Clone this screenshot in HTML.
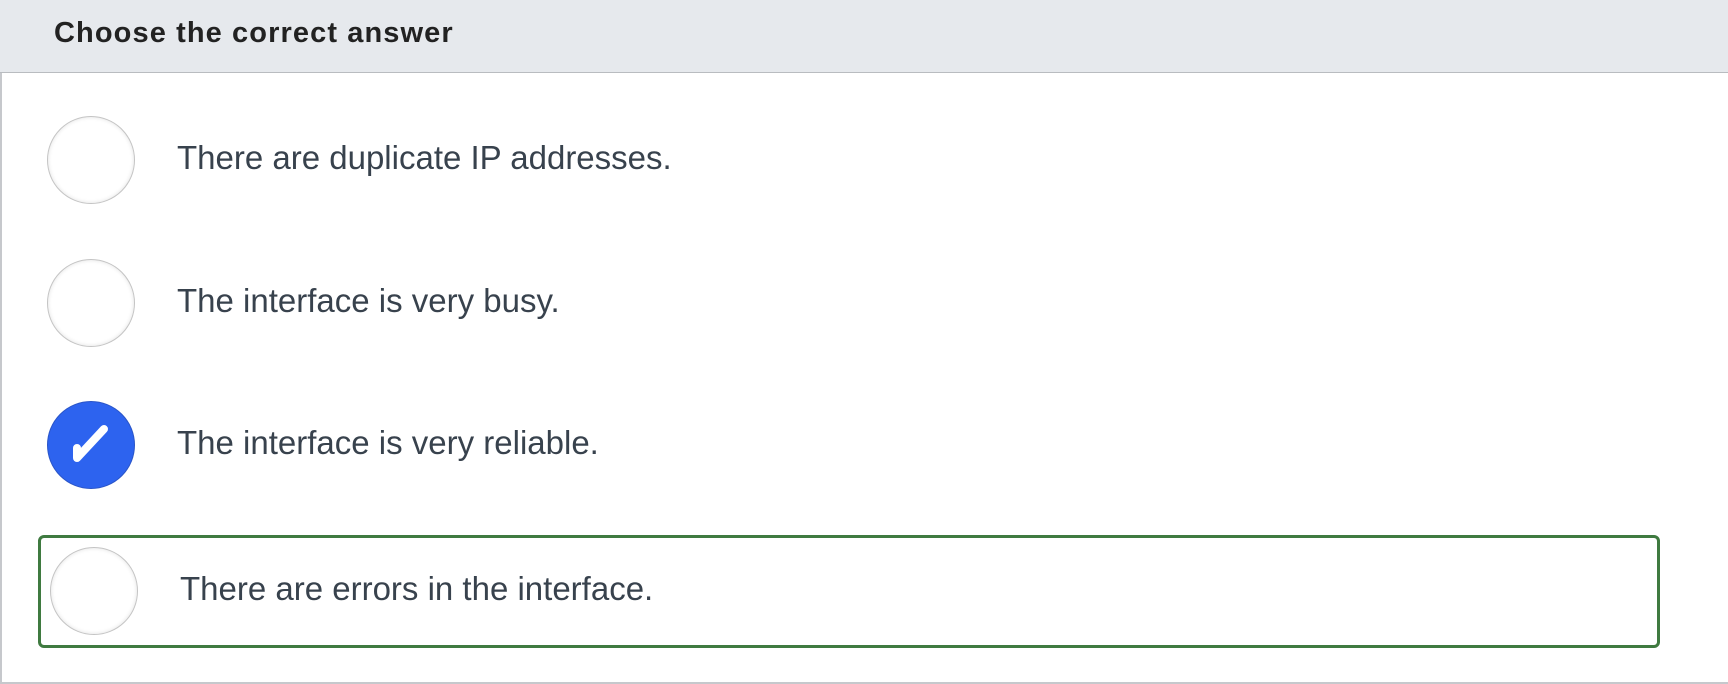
<!DOCTYPE html>
<html><head><style>
html,body{margin:0;padding:0;width:1728px;height:684px;overflow:hidden;background:#fff;}
.wrap{position:absolute;left:0;top:0;width:1726px;height:682px;border-left:2px solid #c6c8cc;border-bottom:2px solid #c6c8cc;}
.hdr{position:absolute;left:0;top:0;width:1728px;height:72px;background:#e6e9ed;border-bottom:1px solid #b9bcc0;}
.hdr span{position:absolute;left:54px;top:17px;font:bold 29px "Liberation Sans",sans-serif;color:#222;letter-spacing:1.1px;}
.c{position:absolute;width:86px;height:86px;border-radius:50%;border:1.5px solid #c4c4c4;background:#fff;box-shadow:inset 0 0 4px rgba(0,0,0,0.12);}
.t{position:absolute;font:33px "Liberation Sans",sans-serif;color:#38424d;}
.box{position:absolute;left:38px;top:535px;width:1616px;height:107px;border:3px solid #3f7a40;border-radius:6px;}
.blue{background:#2d63ef;border-color:#2a55c8;box-shadow:none;}
</style></head><body>
<div class="wrap"></div>
<div class="hdr"><span>Choose the correct answer</span></div>
<div class="c" style="left:47px;top:116px"></div>
<div class="t" style="left:177px;top:139px">There are duplicate IP addresses.</div>
<div class="c" style="left:47px;top:259px"></div>
<div class="t" style="left:177px;top:282px">The interface is very busy.</div>
<div class="c blue" style="left:47px;top:401px">
<svg width="86" height="86" viewBox="0 0 86 86" style="position:absolute;left:0;top:0"><path d="M29 46 L29 56 L56 27" fill="none" stroke="#fff" stroke-width="8" stroke-linecap="round" stroke-linejoin="round"/></svg>
</div>
<div class="t" style="left:177px;top:424px">The interface is very reliable.</div>
<div class="box"></div>
<div class="c" style="left:50px;top:547px"></div>
<div class="t" style="left:180px;top:570px">There are errors in the interface.</div>
</body></html>
